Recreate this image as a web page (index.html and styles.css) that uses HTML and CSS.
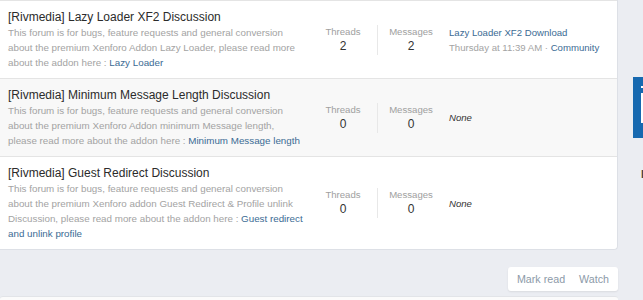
FILE: index.html
```html
<!DOCTYPE html>
<html lang="en">
<head>
    <meta charset="UTF-8">
    <title>Rivmedia Forums</title>
    <link rel="stylesheet" href="styles.css">
</head>
<body>
    <div class="page">
        <div class="main">
            <div class="node-list">
                <div class="node">
                    <div class="node-main">
                        <h3 class="node-title">[Rivmedia] Lazy Loader XF2 Discussion</h3>
                        <div class="node-desc">This forum is for bugs, feature requests and general conversion about the premium Xenforo Addon Lazy Loader, please read more about the addon here : <a href="#">Lazy Loader</a></div>
                    </div>
                    <div class="node-stats">
                        <dl><dt>Threads</dt><dd>2</dd></dl>
                        <dl><dt>Messages</dt><dd>2</dd></dl>
                    </div>
                    <div class="node-extra">
                        <a class="extra-title" href="#">Lazy Loader XF2 Download</a>
                        <div class="extra-meta">Thursday at 11:39 AM · <a href="#">Community</a></div>
                    </div>
                </div>

                <div class="node alt">
                    <div class="node-main">
                        <h3 class="node-title">[Rivmedia] Minimum Message Length Discussion</h3>
                        <div class="node-desc">This forum is for bugs, feature requests and general conversion about the premium Xenforo Addon minimum Message length, please read more about the addon here : <a href="#">Minimum Message length</a></div>
                    </div>
                    <div class="node-stats">
                        <dl><dt>Threads</dt><dd>0</dd></dl>
                        <dl><dt>Messages</dt><dd>0</dd></dl>
                    </div>
                    <div class="node-extra">
                        <span class="none">None</span>
                    </div>
                </div>

                <div class="node">
                    <div class="node-main">
                        <h3 class="node-title">[Rivmedia] Guest Redirect Discussion</h3>
                        <div class="node-desc">This forum is for bugs, feature requests and general conversion about the premium Xenforo addon Guest Redirect &amp; Profile unlink Discussion, please read more about the addon here : <a href="#">Guest redirect and unlink profile</a></div>
                    </div>
                    <div class="node-stats">
                        <dl><dt>Threads</dt><dd>0</dd></dl>
                        <dl><dt>Messages</dt><dd>0</dd></dl>
                    </div>
                    <div class="node-extra">
                        <span class="none">None</span>
                    </div>
                </div>
            </div>

            <div class="actions">
                <div class="button-group">
                    <a href="#">Mark read</a>
                    <a href="#">Watch</a>
                </div>
            </div>

            <div class="next-block"></div>
        </div>

        <aside class="sidebar">
            <div class="promo"><i></i><span></span></div>
            <div class="side-text">I</div>
        </aside>
    </div>
</body>
</html>
```

FILE: styles.css
```css
html, body {
    overflow: hidden;
}

body {
    font-family: "Liberation Sans", Arial, sans-serif;
    background-color: #ebedf2;
    margin: 0;
    padding: 0;
    color: #2b2b2b;
}

a {
    color: #3b6b94;
    text-decoration: none;
}

.page {
    display: grid;
    grid-template-columns: 618px 1fr;
    gap: 15px;
}

.main {
    min-width: 0;
}

.node-list {
    background-color: #fff;
    border: 1px solid #dde0e6;
    border-left: none;
    border-top: none;
    border-radius: 0 0 4px 0;
}

.node {
    display: flex;
    align-items: center;
    border-top: 1px solid #e4e4e4;
}

.node.alt {
    background-color: #f8f8f8;
}

.node-main {
    flex: 1;
    min-width: 0;
    padding: 8px 4px 8px 8px;
}

.node-title {
    margin: 0;
    font-size: 12px;
    font-weight: normal;
    line-height: 16px;
    color: #2b2b2b;
}

.node-desc {
    font-size: 9.8px;
    line-height: 15px;
    color: #a3a3a3;
}

.node.last .node-main {
    padding-bottom: 9px;
}

.node-stats {
    display: flex;
    width: 136px;
    flex-shrink: 0;
}

.node-stats dl {
    margin: 0;
    width: 68px;
    text-align: center;
}

.node-stats dl + dl {
    border-left: 1px solid #e8e8e8;
    width: 66px;
}

.node-stats dt {
    font-size: 9.6px;
    line-height: 13px;
    color: #a0a0a0;
}

.node-stats dd {
    margin: 0;
    font-size: 12px;
    line-height: 17px;
    color: #333;
}

.node-extra {
    width: 160px;
    flex-shrink: 0;
    padding: 0 8px 0 4px;
    font-size: 9.6px;
    line-height: 15px;
}

.extra-title {
    display: block;
}

.extra-meta {
    color: #a3a3a3;
}

.none {
    font-style: italic;
    color: #333;
}

.actions {
    display: flex;
    justify-content: flex-end;
    padding: 17px 0 5px;
}

.button-group {
    display: flex;
    background-color: #fff;
    border-radius: 3px;
    box-shadow: 0 1px 2px rgba(0, 0, 0, 0.08);
    padding: 0 2px;
}

.button-group a {
    padding: 0 7px;
    font-size: 10.7px;
    line-height: 24px;
    color: #8c9aa8;
}

.next-block {
    background-color: #fbfbfb;
    border-top: 1px solid #e2e4e8;
    border-radius: 3px 3px 0 0;
    height: 40px;
}

.sidebar {
    min-width: 0;
    overflow: hidden;
    padding-top: 77px;
}

.promo {
    width: 200px;
    height: 61px;
    background-color: #1769b0;
    padding: 9px 0 0 8px;
    box-sizing: border-box;
}

.promo i {
    display: block;
    width: 30px;
    height: 2px;
    background-color: #fff;
}

.promo span {
    display: block;
    margin-top: 5px;
    width: 60px;
    height: 26px;
    border: 2px solid #fff;
}

.side-text {
    margin-top: 30px;
    padding-left: 8px;
    font-size: 11px;
    font-weight: bold;
    color: #444;
}
```
